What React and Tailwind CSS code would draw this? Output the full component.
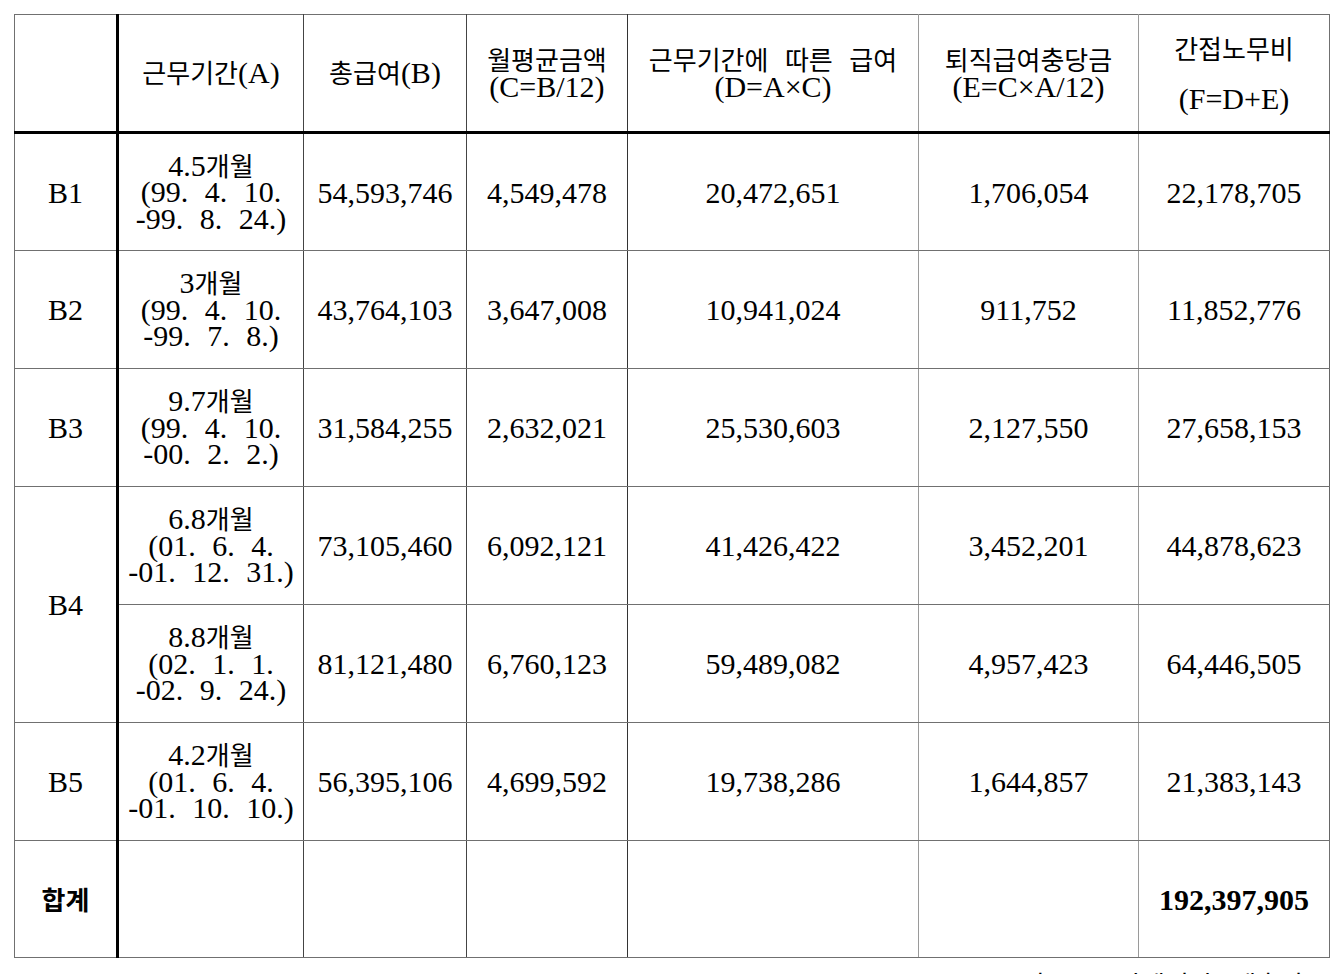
import React from 'react';

const HANGUL = /([\uAC00-\uD7A3]+)/;

function Txt({ t }) {
    return t.split(HANGUL).map((s, i) =>
        HANGUL.test(s) ? (
            <span key={i} className="font-['Noto_Sans_CJK_KR'] text-[26px]">{s}</span>
        ) : (
            <React.Fragment key={i}>{s}</React.Fragment>
        )
    );
}

function Lines({ lines, tight = true }) {
    return (
        <div className={tight ? 'leading-[26.5px]' : 'leading-[50px]'}>
            {lines.map((l, i) => (
                <div key={i} className="whitespace-pre [word-spacing:9px]">
                    <Txt t={l} />
                </div>
            ))}
        </div>
    );
}

const ROWS = [
    { id: 'B1', period: ['4.5개월', '(99. 4. 10.', '-99. 8. 24.)'], vals: ['54,593,746', '4,549,478', '20,472,651', '1,706,054', '22,178,705'] },
    { id: 'B2', period: ['3개월', '(99. 4. 10.', '-99. 7. 8.)'], vals: ['43,764,103', '3,647,008', '10,941,024', '911,752', '11,852,776'] },
    { id: 'B3', period: ['9.7개월', '(99. 4. 10.', '-00. 2. 2.)'], vals: ['31,584,255', '2,632,021', '25,530,603', '2,127,550', '27,658,153'] },
    { id: 'B4', span: 2, period: ['6.8개월', '(01. 6. 4.', '-01. 12. 31.)'], vals: ['73,105,460', '6,092,121', '41,426,422', '3,452,201', '44,878,623'] },
    { id: null, period: ['8.8개월', '(02. 1. 1.', '-02. 9. 24.)'], vals: ['81,121,480', '6,760,123', '59,489,082', '4,957,423', '64,446,505'] },
    { id: 'B5', period: ['4.2개월', '(01. 6. 4.', '-01. 10. 10.)'], vals: ['56,395,106', '4,699,592', '19,738,286', '1,644,857', '21,383,143'] }
];

// per-column right-hand border colour (some rules in the source are darker than others)
const VCOL = ['', 'border-r-[#444]', 'border-r-[#444]', 'border-r-[#333]', 'border-r-[#9a9a9a]', 'border-r-[#9a9a9a]', 'border-r-[#666]'];

const cell = 'border border-[#707070] text-center align-middle p-0';

export default function App() {
    return (
        <div className="min-h-screen bg-white pl-[14px] pt-[14px] font-['Liberation_Serif','Noto_Sans_CJK_KR',serif] text-[30px] text-black">
            <table className="table-fixed border-collapse w-[1315px]">
                <colgroup>
                    <col className="w-[103px]" />
                    <col className="w-[186px]" />
                    <col className="w-[163px]" />
                    <col className="w-[161px]" />
                    <col className="w-[291px]" />
                    <col className="w-[220px]" />
                    <col className="w-[191px]" />
                </colgroup>
                <thead>
                    <tr className="h-[118px]">
                        <th className={`${cell} font-normal border-r-[3px] border-r-black border-b-[3px] border-b-black`} />
                        <th className={`${cell} font-normal border-b-[3px] border-b-black ${VCOL[1]}`}>
                            <Lines lines={['근무기간(A)']} />
                        </th>
                        <th className={`${cell} font-normal border-b-[3px] border-b-black ${VCOL[2]}`}>
                            <Lines lines={['총급여(B)']} />
                        </th>
                        <th className={`${cell} font-normal border-b-[3px] border-b-black ${VCOL[3]}`}>
                            <Lines lines={['월평균금액', '(C=B/12)']} />
                        </th>
                        <th className={`${cell} font-normal border-b-[3px] border-b-black ${VCOL[4]}`}>
                            <Lines lines={['근무기간에 따른 급여', '(D=A×C)']} />
                        </th>
                        <th className={`${cell} font-normal border-b-[3px] border-b-black ${VCOL[5]}`}>
                            <Lines lines={['퇴직급여충당금', '(E=C×A/12)']} />
                        </th>
                        <th className={`${cell} font-normal border-b-[3px] border-b-black`}>
                            <Lines lines={['간접노무비', '(F=D+E)']} tight={false} />
                        </th>
                    </tr>
                </thead>
                <tbody>
                    {ROWS.map((r, i) => (
                        <tr key={i} className="h-[118px]">
                            {r.id && (
                                <td rowSpan={r.span || 1} className={`${cell} border-r-[3px] border-r-black`}>
                                    {r.id}
                                </td>
                            )}
                            <td className={`${cell} ${VCOL[1]}`}>
                                <Lines lines={r.period} />
                            </td>
                            {r.vals.map((v, j) => (
                                <td key={j} className={`${cell} ${VCOL[j + 2]}`}>{v}</td>
                            ))}
                        </tr>
                    ))}
                    <tr className="h-[117px]">
                        <td className={`${cell} border-r-[3px] border-r-black font-bold`}>
                            <Txt t="합계" />
                        </td>
                        <td className={`${cell} ${VCOL[1]}`} />
                        <td className={`${cell} ${VCOL[2]}`} />
                        <td className={`${cell} ${VCOL[3]}`} />
                        <td className={`${cell} ${VCOL[4]}`} />
                        <td className={`${cell} ${VCOL[5]}`} />
                        <td className={`${cell} font-bold`}>192,397,905</td>
                    </tr>
                </tbody>
            </table>
            <p className="mt-[11px] pr-[14px] text-right leading-[30px] [word-spacing:12px]">
                <Txt t="자료 : 관계기관 제출자료" />
            </p>
        </div>
    );
}
